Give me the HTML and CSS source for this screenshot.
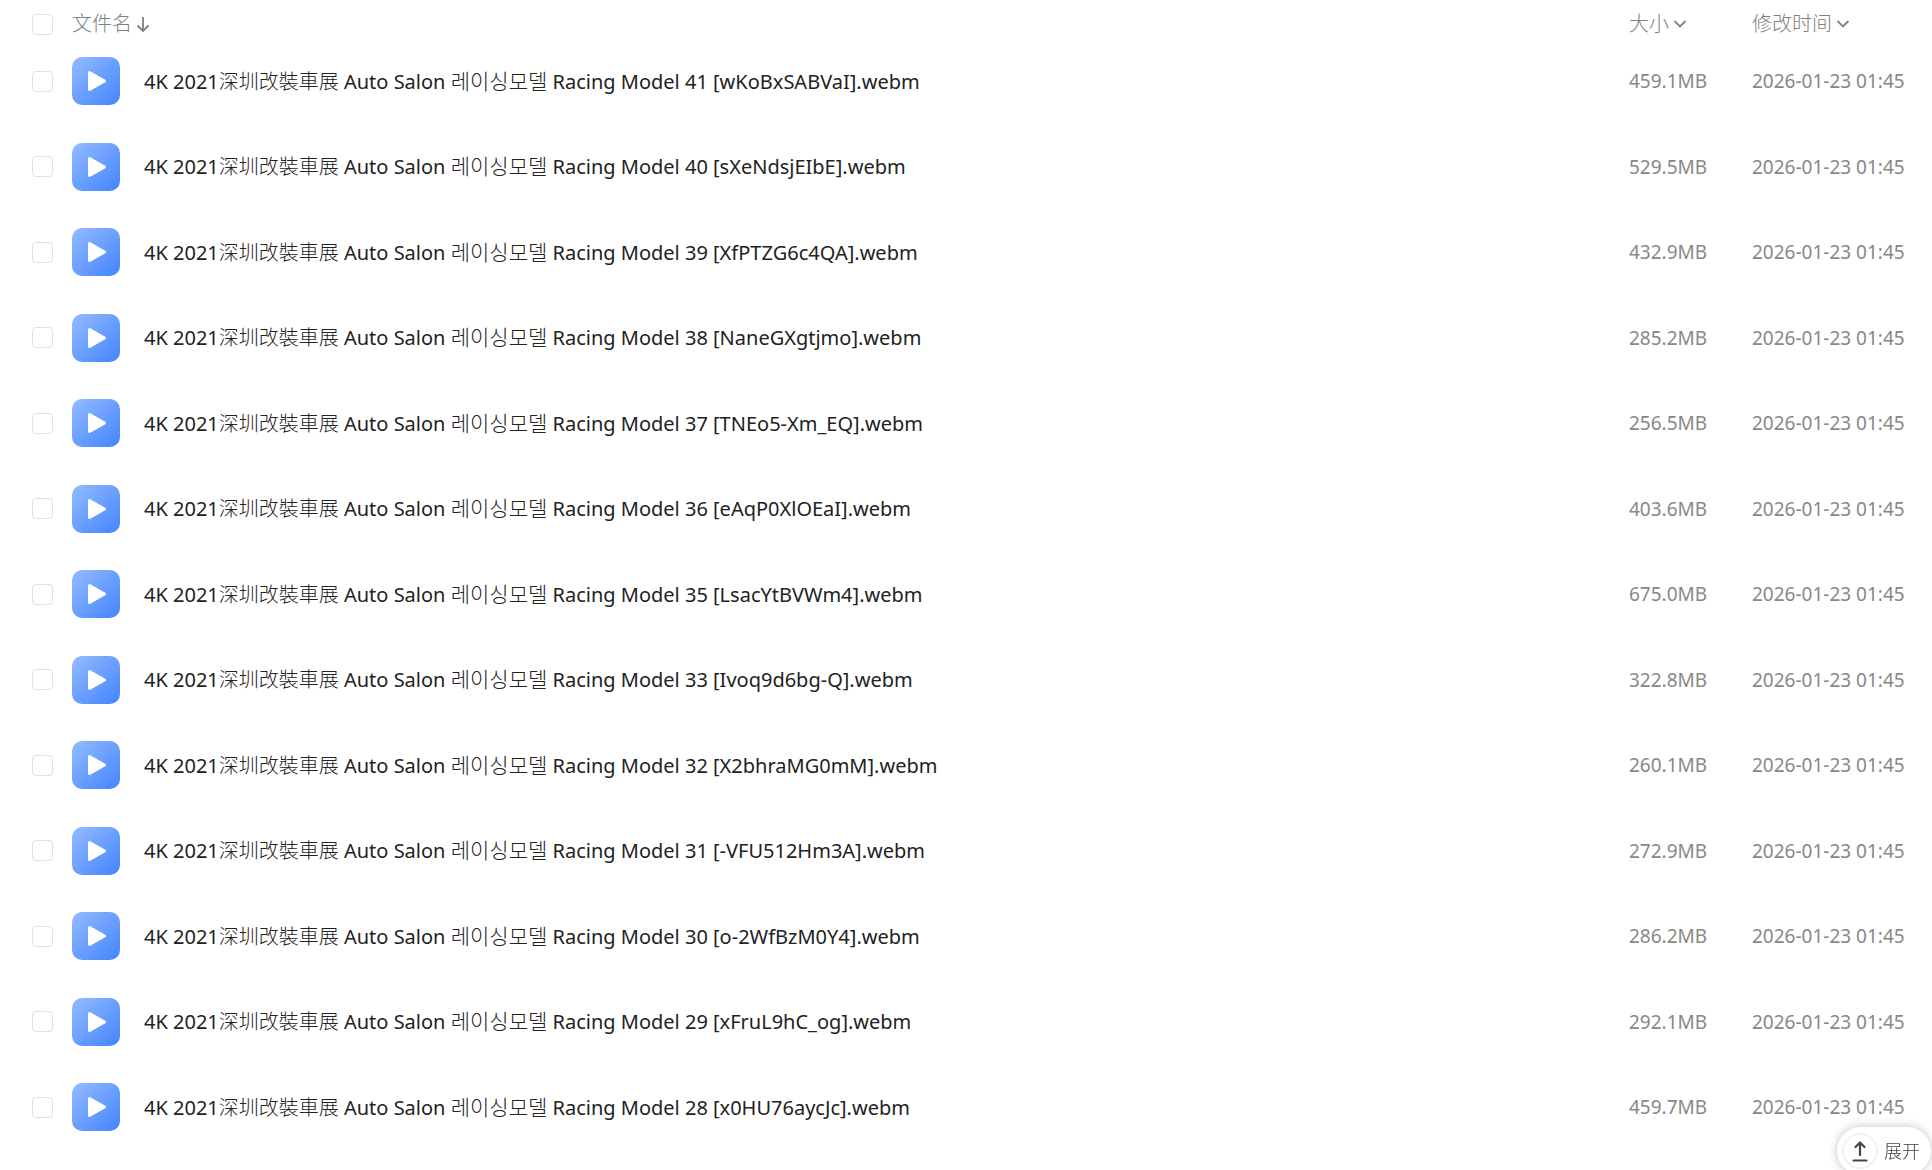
FILE: index.html
```html
<!DOCTYPE html>
<html lang="zh-CN">
<head>
<meta charset="utf-8">
<meta name="viewport" content="width=device-width, initial-scale=1">
<title>文件列表</title>
<link rel="stylesheet" href="styles.css">
</head>
<body>
<svg class="defs" aria-hidden="true">
  <defs>
    <linearGradient id="tile" x1="0" y1="0" x2="1" y2="1">
      <stop offset="0" stop-color="#94bbff"/>
      <stop offset="1" stop-color="#4284ff"/>
    </linearGradient>
    <symbol id="video" viewBox="0 0 48 48">
      <rect width="48" height="48" rx="10" fill="url(#tile)"/>
      <path d="M17.500 15.500L32.500 24L17.500 32.500Z" fill="#fff" stroke="#fff" stroke-width="3" stroke-linejoin="round"/>
    </symbol>
    <symbol id="chevron" viewBox="0 0 14 14">
      <path d="M1.500 4L7 9.500L12.500 4" fill="none" stroke="currentColor" stroke-width="1.800"/>
    </symbol>
  </defs>
</svg>
<table class="files">
  <colgroup>
    <col class="col-pick">
    <col class="col-icon">
    <col>
    <col class="col-size">
    <col class="col-date">
  </colgroup>
  <thead>
    <tr>
      <th class="pick"><input type="checkbox" aria-label="全选"></th>
      <th colspan="2"><button class="sort" type="button">文件名<svg class="arrow" viewBox="0 0 14 18"><path d="M7 2V16M1.500 10.500L7 16L12.500 10.500" fill="none" stroke="currentColor" stroke-width="1.800"/></svg></button></th>
      <th><button class="sort" type="button">大小<svg class="chevron"><use href="#chevron"/></svg></button></th>
      <th><button class="sort" type="button">修改时间<svg class="chevron"><use href="#chevron"/></svg></button></th>
    </tr>
  </thead>
  <tbody id="rows"></tbody>
</table>
<button class="expand" type="button">
  <span class="ring"><svg viewBox="0 0 18 22"><path d="M9 15V3M4.500 7L9 2.500L13.500 7M2.500 20.500H15.500" fill="none" stroke="currentColor" stroke-width="2.200" stroke-linecap="round" stroke-linejoin="round"/></svg></span>
  展开
</button>
<script src="files.js"></script>
</body>
</html>
```
FILE: styles.css
```css
* {
  box-sizing: border-box;
}

body {
  margin: 0;
  background: #fff;
  color: #222;
  font-family: "Noto Sans", "Noto Sans CJK SC", "Noto Sans CJK KR", sans-serif;
  font-size: 19px;
  line-height: 24px;
}

.defs {
  position: absolute;
  width: 0;
  height: 0;
}

.files {
  width: 100%;
  table-layout: fixed;
  border-collapse: collapse;
}

.col-pick,
.col-icon {
  width: 72px;
}

.col-size {
  width: 123px;
}

.col-date {
  width: 180px;
}

.files th,
.files td {
  padding: 0;
  text-align: left;
  vertical-align: middle;
  font-weight: 400;
  white-space: nowrap;
}

.files th {
  height: 38px;
  padding-top: 10px;
}

.files tbody tr {
  height: 85px;
}

.files tbody tr:nth-child(odd) {
  height: 86px;
}

.files .pick {
  padding-left: 32px;
}

.size,
.date {
  color: #888;
}

input[type="checkbox"] {
  display: block;
  appearance: none;
  width: 21px;
  height: 21px;
  margin: 0;
  border: 1px solid #e0e0e0;
  border-radius: 4px;
  background: #fff;
}

input[type="checkbox"]:checked {
  border-color: #4284ff;
  background: #4284ff;
}

.icon svg {
  display: block;
  width: 48px;
  height: 48px;
}

.name {
  font-size: 20px;
}

.cjk {
  font-weight: 300;
}

.cjk:lang(ko) {
  font-size: 21px;
}

button {
  border: 0;
  background: none;
  font-family: inherit;
  cursor: pointer;
}

.sort {
  display: flex;
  align-items: center;
  gap: 4px;
  padding: 0;
  color: #808080;
  font-size: 20px;
  font-weight: 300;
  line-height: 24px;
}

.chevron {
  width: 14px;
  height: 14px;
}

.arrow {
  width: 14px;
  height: 18px;
}

.expand {
  position: fixed;
  right: 1px;
  bottom: -5px;
  display: flex;
  align-items: center;
  gap: 6px;
  height: 48px;
  padding: 0 11px 0 5px;
  border-radius: 24px;
  background: #fff;
  box-shadow: 0 0 10px rgba(0, 0, 0, 0.25);
  color: #444;
  font-size: 18px;
  font-weight: 300;
  line-height: 24px;
}

.ring {
  display: grid;
  place-items: center;
  width: 36px;
  height: 36px;
  border: 2px solid #f2f2f2;
  border-radius: 50%;
}

.ring svg {
  width: 18px;
  height: 22px;
}
```
FILE: files.js
```js
const files = [
  ["41", "wKoBxSABVaI", "459.1MB"],
  ["40", "sXeNdsjEIbE", "529.5MB"],
  ["39", "XfPTZG6c4QA", "432.9MB"],
  ["38", "NaneGXgtjmo", "285.2MB"],
  ["37", "TNEo5-Xm_EQ", "256.5MB"],
  ["36", "eAqP0XlOEaI", "403.6MB"],
  ["35", "LsacYtBVWm4", "675.0MB"],
  ["33", "Ivoq9d6bg-Q", "322.8MB"],
  ["32", "X2bhraMG0mM", "260.1MB"],
  ["31", "-VFU512Hm3A", "272.9MB"],
  ["30", "o-2WfBzM0Y4", "286.2MB"],
  ["29", "xFruL9hC_og", "292.1MB"],
  ["28", "x0HU76aycJc", "459.7MB"],
];

document.getElementById("rows").innerHTML = files.map(([no, id, size]) => `
  <tr>
    <td class="pick"><input type="checkbox" id="file-${no}"></td>
    <td class="icon"><svg aria-hidden="true"><use href="#video"/></svg></td>
    <td class="name"><label for="file-${no}">4K 2021<span class="cjk">深圳改裝車展</span> Auto Salon <span class="cjk" lang="ko">레이싱모델</span> Racing Model ${no} [${id}].webm</label></td>
    <td class="size">${size}</td>
    <td class="date">2026-01-23 01:45</td>
  </tr>`).join("");
```
